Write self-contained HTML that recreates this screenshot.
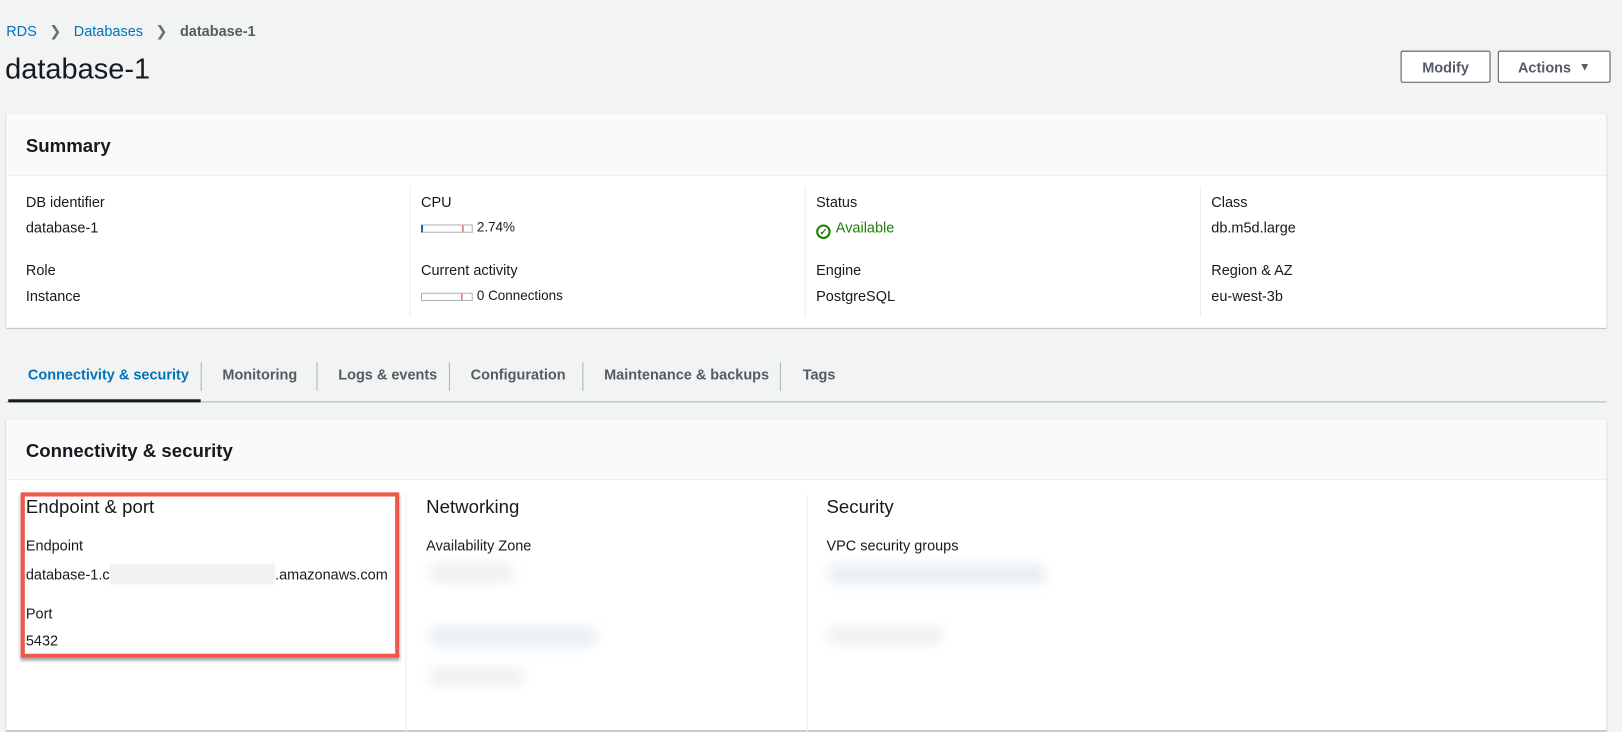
<!DOCTYPE html>
<html><head><meta charset="utf-8"><style>
*{box-sizing:border-box;margin:0;padding:0}
html,body{width:1622px;height:693px;overflow:hidden;background:#f2f3f3}
#w{position:absolute;left:0;top:0;width:1568px;height:670px;transform:scale(1.0344);transform-origin:0 0;font-family:"Liberation Sans",sans-serif;color:#16191f;font-size:14px}
.a{position:absolute;white-space:nowrap}
.link{color:#0073bb}
.btn{position:absolute;top:49px;height:31px;border:1px solid #545b64;background:#fff;font-weight:bold;color:#545b64;font-size:14px;display:flex;align-items:center;justify-content:center;border-radius:2px}
.panel{position:absolute;left:6px;width:1547px;background:#fff;box-shadow:0 1px 1px rgba(0,22,40,.3),0 0 0 1px #eaeded}
.ph{background:#fafafa;border-bottom:1px solid #eaeded}
.vd{position:absolute;width:1px;background:#eaeded}
.bar{display:inline-block;width:50px;height:8px;border:1px solid #aab7b8;position:relative;vertical-align:middle;margin-right:4px}
.bar i{position:absolute;top:0;height:6px;width:1px;background:#d13212;left:38px}
.blur{position:absolute;background:#e6eef3;filter:blur(6px);border-radius:4px}
</style></head><body><div id="w">
<div class="a" style="left:6px;top:22px;font-size:14px"><span class="link">RDS</span><span style="color:#687078;margin:0 12px">&#x276F;</span><span class="link">Databases</span><span style="color:#687078;margin:0 12px">&#x276F;</span><span style="color:#545b64;font-weight:bold">database-1</span></div>
<div class="a" style="left:5px;top:51px;font-size:28px">database-1</div>
<div class="btn" style="left:1354px;width:87px">Modify</div>
<div class="btn" style="left:1448px;width:109px">Actions&nbsp;&nbsp;<span style="font-size:11px">&#9660;</span></div>

<div class="panel" style="top:110px;height:207px">
<div class="ph" style="height:60px"></div>
<div class="a" style="left:19px;top:21px;font-size:18px;font-weight:bold">Summary</div>
<div class="vd" style="left:390px;top:70px;height:126px"></div>
<div class="vd" style="left:772px;top:70px;height:126px"></div>
<div class="vd" style="left:1154px;top:70px;height:126px"></div>
<div class="a" style="left:19px;top:77px">DB identifier</div>
<div class="a" style="left:19px;top:102px">database-1</div>
<div class="a" style="left:19px;top:143px">Role</div>
<div class="a" style="left:19px;top:168px">Instance</div>
<div class="a" style="left:401px;top:77px">CPU</div>
<div class="a" style="left:401px;top:102px;font-size:13px"><span class="bar" style="border-left:2px solid #0073bb"><i></i></span>2.74%</div>
<div class="a" style="left:401px;top:143px">Current activity</div>
<div class="a" style="left:401px;top:168px;font-size:13px"><span class="bar"><i></i></span>0 Connections</div>
<div class="a" style="left:783px;top:77px">Status</div>
<div class="a" style="left:783px;top:102px;color:#1d8102"><span style="display:inline-block;width:14px;height:14px;border:2px solid #1d8102;border-radius:50%;font-size:9px;line-height:10px;text-align:center;font-weight:bold;vertical-align:-2px;margin-right:5px">&#10003;</span>Available</div>
<div class="a" style="left:783px;top:143px">Engine</div>
<div class="a" style="left:783px;top:168px">PostgreSQL</div>
<div class="a" style="left:1165px;top:77px">Class</div>
<div class="a" style="left:1165px;top:102px">db.m5d.large</div>
<div class="a" style="left:1165px;top:143px">Region &amp; AZ</div>
<div class="a" style="left:1165px;top:168px">eu-west-3b</div>
</div>

<div class="a" style="left:6px;top:388px;width:1547px;height:1px;background:#aab7b8"></div>
<div class="a" style="left:8px;top:386px;width:186px;height:3px;background:#16191f"></div>
<div class="a" style="left:27px;top:354px;font-weight:bold;color:#0073bb">Connectivity &amp; security</div>
<div class="a" style="left:194px;top:350px;width:1px;height:28px;background:#aab7b8"></div>
<div class="a" style="left:215px;top:354px;font-weight:bold;color:#545b64">Monitoring</div>
<div class="a" style="left:306px;top:350px;width:1px;height:28px;background:#aab7b8"></div>
<div class="a" style="left:327px;top:354px;font-weight:bold;color:#545b64">Logs &amp; events</div>
<div class="a" style="left:434px;top:350px;width:1px;height:28px;background:#aab7b8"></div>
<div class="a" style="left:455px;top:354px;font-weight:bold;color:#545b64">Configuration</div>
<div class="a" style="left:563px;top:350px;width:1px;height:28px;background:#aab7b8"></div>
<div class="a" style="left:584px;top:354px;font-weight:bold;color:#545b64">Maintenance &amp; backups</div>
<div class="a" style="left:754px;top:350px;width:1px;height:28px;background:#aab7b8"></div>
<div class="a" style="left:776px;top:354px;font-weight:bold;color:#545b64">Tags</div>

<div class="panel" style="top:406px;height:300px">
<div class="ph" style="height:58px"></div>
<div class="a" style="left:19px;top:20px;font-size:18px;font-weight:bold">Connectivity &amp; security</div>
<div class="vd" style="left:386px;top:72px;height:230px"></div>
<div class="vd" style="left:774px;top:72px;height:230px"></div>
<div class="a" style="left:19px;top:74px;font-size:18px">Endpoint &amp; port</div>
<div class="a" style="left:19px;top:113px">Endpoint</div>
<div class="a" style="left:19px;top:139px">database-1.c<span style="display:inline-block;width:160px;height:20px;background:#f2f2f2;vertical-align:-5px"></span>.amazonaws.com</div>
<div class="a" style="left:19px;top:179px">Port</div>
<div class="a" style="left:19px;top:205px">5432</div>
<div class="a" style="left:406px;top:74px;font-size:18px">Networking</div>
<div class="a" style="left:406px;top:113px">Availability Zone</div>
<div class="a" style="left:793px;top:74px;font-size:18px">Security</div>
<div class="a" style="left:793px;top:113px">VPC security groups</div>
<div class="blur" style="left:410px;top:140px;width:80px;height:16px;background:#eee"></div>
<div class="blur" style="left:410px;top:200px;width:160px;height:18px"></div>
<div class="blur" style="left:410px;top:240px;width:90px;height:16px;background:#eee"></div>
<div class="blur" style="left:795px;top:140px;width:210px;height:18px"></div>
<div class="blur" style="left:795px;top:200px;width:110px;height:16px;background:#eee"></div>
</div>
<div class="a" style="left:20px;top:476px;width:366px;height:160px;border:4px solid #f0564a;box-shadow:0 3px 3px rgba(0,0,0,.35)"></div>
</div></body></html>
